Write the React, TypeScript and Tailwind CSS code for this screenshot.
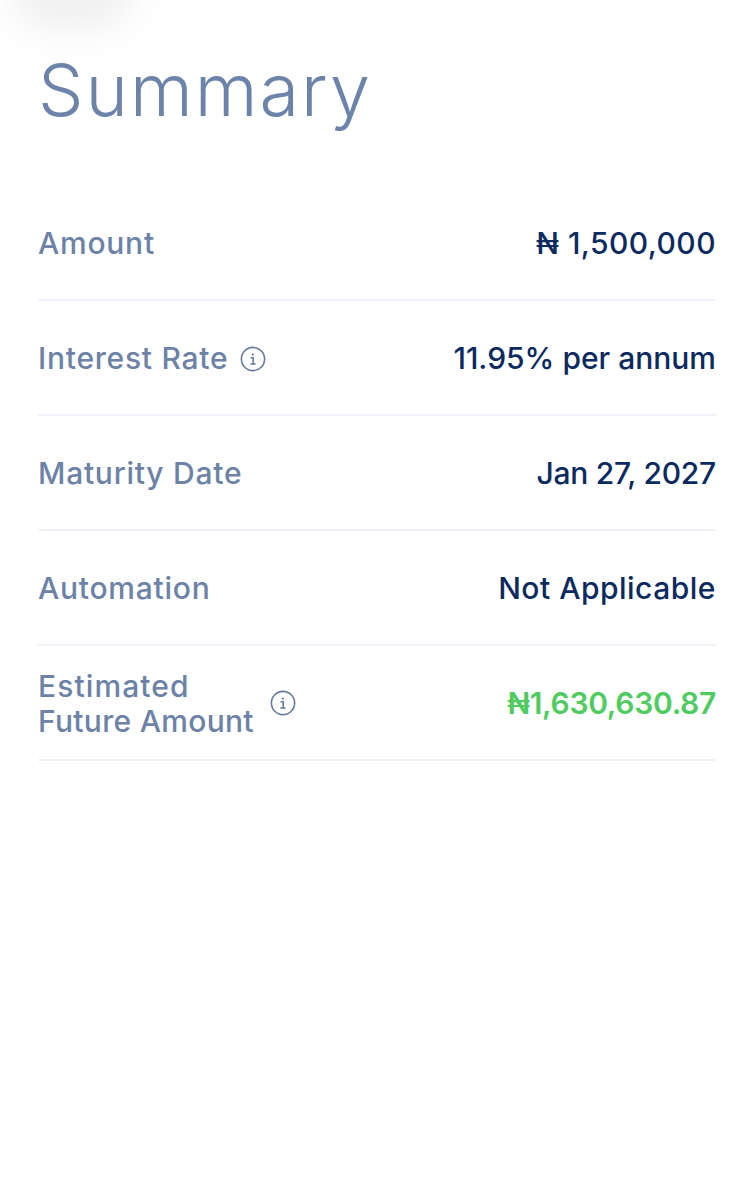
import { ReactNode } from 'react';

function InfoIcon() {
  return (
    <svg className="w-[26px] h-[26px] shrink-0" viewBox="0 0 26 26" fill="none" stroke="#66799b">
      <circle cx="13" cy="13" r="11.6" strokeWidth="1.6" />
      <circle cx="12.8" cy="8.6" r="1.1" fill="#66799b" stroke="none" />
      <path d="M10.6 11.8h2.6v6M10.4 18h5.2" strokeWidth="1.5" />
    </svg>
  );
}

function Row({ label, value, valueClass = 'text-[#0b2a60] font-medium' }: { label: ReactNode; value: string; valueClass?: string }) {
  return (
    <div className="h-[115px] pt-[2px] flex items-center justify-between border-b-2 border-[#f0f2f9]">
      <div className="flex items-center text-[#6c82a6] text-[30px] leading-[35px] tracking-[0.75px] font-medium">{label}</div>
      <div className={`text-[30px] leading-[35px] ${valueClass}`}>{value}</div>
    </div>
  );
}

export default function App() {
  return (
    <div className="relative w-[754px] h-[1200px] bg-white overflow-hidden font-['Inter',sans-serif]">
      {/* soft smudge at the top edge */}
      <div className="absolute left-[10px] top-[-50px] w-[125px] h-[80px] rounded-full bg-[#f0f0f0] blur-[18px]" />

      <div className="relative px-[38px] pt-[46px]">
        <h1 className="text-[#6c84aa] text-[72px] leading-[88px] tracking-[2px] font-light h-[140px]">Summary</h1>

        <Row label="Amount" value="₦ 1,500,000" valueClass="text-[#0b2a60] font-medium tracking-[0.45px]" />
        <Row
          label={
            <>
              <span>Interest Rate</span>
              <span className="ml-[12px]">
                <InfoIcon />
              </span>
            </>
          }
          value="11.95% per annum"
        />
        <Row label="Maturity Date" value="Jan 27, 2027" valueClass="text-[#0b2a60] font-medium tracking-[-0.25px]" />
        <Row label="Automation" value="Not Applicable" valueClass="text-[#0b2a60] font-medium tracking-[0.5px]" />
        <Row
          label={
            <>
              <span>
                <span className="tracking-[1.1px]">Estimated</span>
                <br />
                <span className="tracking-[0.3px]">Future Amount</span>
              </span>
              <span className="ml-[16px] -mt-[2px]">
                <InfoIcon />
              </span>
            </>
          }
          value="₦1,630,630.87"
          valueClass="text-[#4fcb5f] font-semibold tracking-[-0.3px]"
        />
      </div>
    </div>
  );
}
